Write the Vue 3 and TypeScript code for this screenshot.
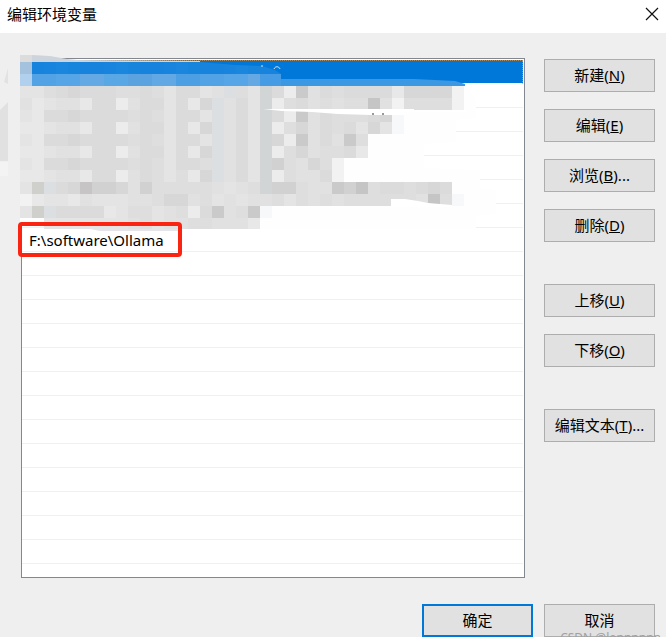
<script setup lang="ts">
interface Action {
  label: string
  key: string
  suffix?: string
}

const groups: Action[][] = [
  [
    { label: '新建', key: 'N' },
    { label: '编辑', key: 'E' },
    { label: '浏览', key: 'B', suffix: '...' },
    { label: '删除', key: 'D' },
  ],
  [
    { label: '上移', key: 'U' },
    { label: '下移', key: 'O' },
  ],
  [{ label: '编辑文本', key: 'T', suffix: '...' }],
]

const rows: string[] = Array.from({ length: 21 }, (_, i) => (i === 7 ? 'F:\\software\\Ollama' : ''))

// One letter per 12px tile; '.' leaves the tile empty.
const shades: Record<string, string> = {
  a: '#c5c5c5',
  b: '#cacaca',
  c: '#d1d1d1',
  d: '#d7d7d7',
  e: '#dbdbdb',
  f: '#dedede',
  g: '#e1e1e1',
  h: '#e4e4e4',
  i: '#e8e8e8',
  j: '#ececec',
  k: '#f2f2f3',
  l: '#f7f8fa',
  m: '#dbdfe1',
  n: '#d2d5d5',
  o: '#c7c4c5',
  p: '#cfcfcb',
}

const mosaic: string[] = [
  'hhfedeeeffefheehgmfhnejbgefeeeeiddddk',
  'gihggieejgeeheidmgehnjfegfgffagkffffk',
  'hieedeeeefefheehmgehnejbgefffedl.....',
  'iihggieejgeeheidmgehnjfdgefehdhl.....',
  'hieedeeeefefheehmgehndjbgegbf........',
  'iihggieejgeeheidmgehnjfdgffei........',
  'hieedeeeefefheefmgehncfgdfk..........',
  'iihggieejgefhfidmgehnjfggek..........',
  'hpmedoccdgcfffffghgfnccfggbcafeefede.',
  'kihhighhhggfddgfhghggfhfgfgffffffgafl',
  'hpmeeeeihffhgfjebgfbl................',
  '..hhhhhhhgfhggffgggi.................',
]

interface Tile {
  x: number
  y: number
  fill: string
}

const tiles: Tile[] = mosaic.flatMap((line, r) =>
  [...line].flatMap((c, i) => (c === '.' ? [] : [{ x: 20 + i * 12, y: 86 + r * 12, fill: shades[c] }])),
)

const upper = ['#1783dc', '#1984de', '#1a86dd', '#1885dd', '#1783dc']
const lower = ['#52a2e6', '#56a5e6', '#64a9e4', '#5aa7e6', '#5aa3e0', '#62a8e5', '#4d9fe4']
const blueTiles: Tile[] = Array.from({ length: 21 }, (_, i) => [
  { x: 32 + i * 12, y: 62, fill: upper[i % upper.length] },
  { x: 32 + i * 12, y: 74, fill: i > 18 ? '#459be4' : lower[(i >> 1) % lower.length] },
]).flat()
</script>

<template>
  <div class="window">
    <header class="titlebar">
      <h1>编辑环境变量</h1>
      <button class="close" type="button" aria-label="关闭">
        <svg width="14" height="14" viewBox="0 0 14 14" aria-hidden="true">
          <path d="M1 1L13 13M13 1L1 13" stroke="#111" stroke-width="1.2" fill="none" />
        </svg>
      </button>
    </header>

    <main class="content">
      <ul class="list" role="listbox" aria-label="编辑环境变量">
        <li v-for="(row, i) in rows" :key="i" role="option" :aria-selected="i === 0" :class="['row', { selected: i === 0 }]">
          {{ row }}
        </li>
      </ul>

      <div class="actions">
        <div v-for="(group, g) in groups" :key="g" class="group">
          <button v-for="a in group" :key="a.key" type="button" class="btn">
            {{ a.label }}(<u>{{ a.key }}</u>){{ a.suffix }}
          </button>
        </div>
      </div>
    </main>

    <footer class="footer">
      <button type="button" class="btn primary">确定</button>
      <button type="button" class="btn">取消</button>
      <span class="watermark">CSDN @lonnnnnn</span>
    </footer>

    <svg class="redaction" width="530" height="240" viewBox="0 0 530 240" aria-hidden="true">
      <path d="M0 110L8 102V161H0Z" fill="#e1e1e1" />
      <path d="M4 82L8 68V84Z" fill="#e2e2e2" />
      <path d="M0 162H8V176H0Z" fill="#f3f3f3" />
      <!-- smeared area over the hidden entries -->
      <path d="M20 84H465L476 100V118L456 120V142L424 144V168L480 170V188L496 190V214L476 216V229H182L20 222Z" fill="#fefefe" />
      <path d="M32 55L50 56L67 59L78 60L200 61V63H20V55Z" fill="#cdd4db" />
      <path d="M20 55H32V62H20Z" fill="#dcdcdc" />
      <path d="M78 59H522V60H78Z" fill="#fff" />
      <clipPath id="smear">
        <path d="M32 62H200L235 65L262 66L275 70L281 74V86H32Z" />
      </clipPath>
      <g clip-path="url(#smear)" shape-rendering="crispEdges">
        <rect v-for="(t, i) in blueTiles" :key="i" :x="t.x" :y="t.y" width="12" height="12" :fill="t.fill" />
      </g>
      <path d="M281 79H414L455 81L465 84V86H281Z" fill="#3d98e3" />
      <path d="M20 62H32V74H20Z" fill="#a4c2dd" />
      <path d="M20 74H32V86H20Z" fill="#b0d0ed" />
      <path d="M261 66h2M274 69c1-3 5-3 6 0" stroke="#cfe6fa" fill="none" />
      <g shape-rendering="crispEdges">
        <rect v-for="(t, i) in tiles" :key="i" :x="t.x" :y="t.y" width="12" height="12" :fill="t.fill" />
      </g>
      <!-- strokes left uncovered between the tiles -->
      <path d="M263 109H414V110H466V112H404V115H372L338 114L312 112L282 111Z" fill="#fff" />
      <path d="M372 114h2M382 114h2" stroke="#333" />
      <path d="M391 199H405L418 201L428 203L452 205V207H391V206Z" fill="#fff" />
      <path d="M20 229H260V232H20Z" fill="#fff" />
      <path d="M75 226L100 229H182V231H100Z" fill="#e4e4ea" />
    </svg>
    <div class="highlight"></div>
  </div>
</template>

<style>
body {
  margin: 0;
  background: #efefef;
}
</style>

<style scoped>
.window {
  position: relative;
  display: flex;
  flex-direction: column;
  box-sizing: border-box;
  min-height: 100vh;
  overflow: hidden;
  background: #efefef;
  color: #000;
  font-family: 'Noto Sans', 'Noto Sans CJK SC', sans-serif;
  font-size: 15px;
}

.titlebar {
  display: flex;
  align-items: center;
  justify-content: space-between;
  height: 33px;
  padding: 0 7px;
  background: #fff;
}

h1 {
  margin: 0;
  padding-bottom: 4px;
  font-size: 15px;
  font-weight: 400;
  line-height: 27px;
}

.close {
  display: flex;
  padding: 0;
  margin-bottom: 5px;
  border: 0;
  background: none;
}

.content {
  display: flex;
  flex: 1;
  gap: 19px;
  padding: 25px 11px 0 21px;
}

.list {
  flex: 1;
  margin: 0;
  padding: 1px 1px 13px 0;
  border: 1px solid #828790;
  background: #fff;
  list-style: none;
}

.row {
  box-sizing: border-box;
  height: 24px;
  padding-left: 7px;
  border-bottom: 1px solid #f0f0f0;
  line-height: 24px;
}

.row.selected {
  border: 1px dotted #a98b62;
  border-left: 0;
  border-bottom: 1px solid #fff;
  background: #0078d9;
}

.actions {
  display: flex;
  flex-direction: column;
  gap: 42px;
  padding-top: 1px;
}

.group {
  display: flex;
  flex-direction: column;
  gap: 17px;
}

.btn {
  box-sizing: border-box;
  width: 111px;
  height: 33px;
  padding: 0;
  border: 1px solid #adadad;
  border-radius: 0;
  background: #e1e1e1;
  color: #000;
  font: inherit;
  line-height: 31px;
  white-space: nowrap;
}

.btn.primary {
  border: 2px solid #0078d7;
  line-height: 29px;
}

.footer {
  position: relative;
  display: flex;
  justify-content: flex-end;
  gap: 11px;
  height: 33px;
  padding: 26px 11px 0 0;
}

.watermark {
  position: absolute;
  top: 53px;
  right: 5px;
  color: #a0a0a0;
  font-size: 12px;
  line-height: 14px;
}

.redaction {
  position: absolute;
  top: 0;
  left: 0;
}

.highlight {
  position: absolute;
  top: 222px;
  left: 18px;
  box-sizing: border-box;
  width: 164px;
  height: 35px;
  border: 4px solid #fa2413;
  border-radius: 4px;
}
</style>
